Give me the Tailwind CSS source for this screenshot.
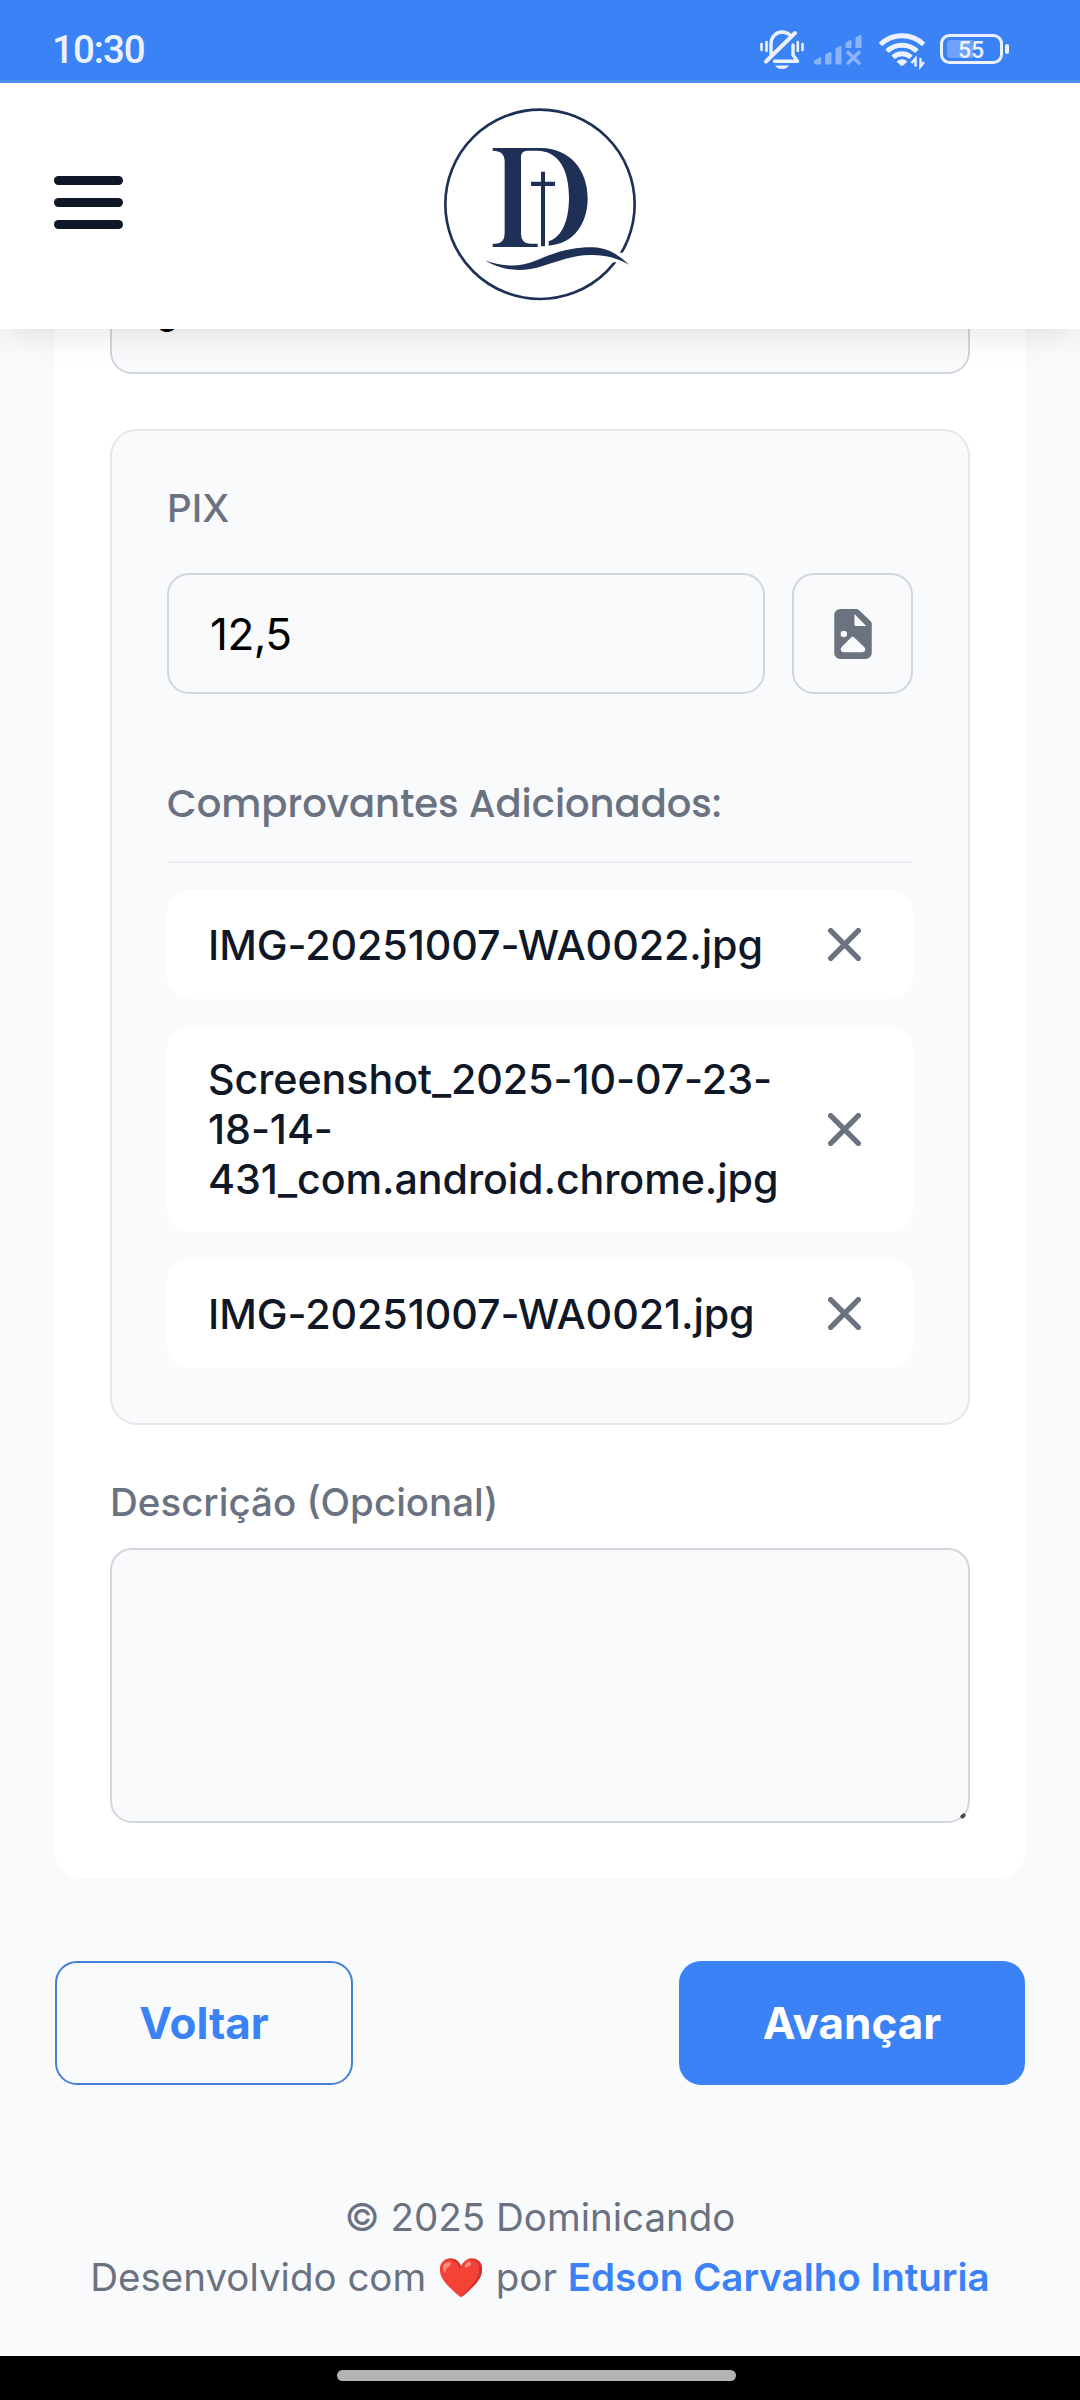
<!DOCTYPE html>
<html lang="pt-BR">
<head>
<meta charset="utf-8">
<title>Dominicando</title>
<script src="https://cdn.jsdelivr.net/npm/@tailwindcss/browser@4"></script>
</head>
<body class="flex h-[2400px] w-[1080px] flex-col overflow-hidden bg-[#f9fafc] font-['Inter',sans-serif] text-[38.5px] text-gray-500">

  <!-- System status bar -->
  <div class="relative z-20 flex h-[83px] shrink-0 items-start justify-between border-b-[3px] border-[#4e8ced] bg-[#3b82f6] pl-[52px] pr-[70px]">
    <span class="pt-[26px] font-['Roboto',sans-serif] text-[38.5px] leading-[48px] font-medium tracking-[-1px] text-[#ebf2fe]">10:30</span>
    <svg class="mt-[26px] h-[46px] w-[252px]" viewBox="758 26 252 46" fill="none">
      <!-- muted bell -->
      <g stroke="#ebf2fe" stroke-width="3.4" stroke-linecap="round" stroke-linejoin="round">
        <path d="M771 56V44c0-7 5-12 11-12 3 0 6 1 8 3"/>
        <path d="M774.500 61.300H797.500L793 55V45"/>
        <path d="M766 61.500L795 33" stroke-width="4"/>
        <path d="M761.500 44v6M766.500 42v9M797.800 42v9M802.500 44v6" stroke-width="2.600"/>
      </g>
      <path d="M775 65.500h14q-2.500 3.500-7 3.500t-7-3.500z" fill="#ebf2fe"/>
      <!-- no signal -->
      <g fill="#89b4fa">
        <path d="M814 60.500l7-3.500v7.500h-5q-2 0-2-2z"/>
        <path d="M825 55.500q0-1 1-1.500l4-2q1.500-.5 1.500 1v10q0 1.500-1.500 1.500h-3.500q-1.500 0-1.500-1.500z"/>
        <path d="M835.500 49.500q0-1 1-1.500l3.500-2q1.500-.5 1.500 1v16q0 1.500-1.500 1.500h-3q-1.500 0-1.500-1.500z"/>
        <path d="M845.500 43.500q0-1 1-1.500l3.500-2q1.500-.5 1.500 1v7h-6z"/>
        <path d="M855.500 38.500q0-1 1-1.500l3.500-2q1.500-.5 1.500 1v12h-6z"/>
      </g>
      <path d="M848 52.500l11 10.500M859 52.500l-11 10.500" stroke="#89b4fa" stroke-width="3.600" stroke-linecap="round"/>
      <!-- wifi -->
      <g stroke="#ebf2fe" stroke-width="5">
        <path d="M880.500 44.500a31 31 0 0 1 43 0"/>
        <path d="M887 51.300a21.500 21.500 0 0 1 30 0"/>
        <path d="M893 57.300a13 13 0 0 1 18 0"/>
      </g>
      <path d="M896.500 61.500q5.500-4.500 11 0l-4 3.700q-1.500 1-3 0z" fill="#ebf2fe"/>
      <path d="M915.500 66.500v-8l-4 4.500M920.500 58v8.500l3.500-4.500" stroke="#ebf2fe" stroke-width="2.400"/>
      <!-- battery -->
      <rect x="941.500" y="35.500" width="60" height="27" rx="8" stroke="#ebf2fe" stroke-width="3"/>
      <path d="M951 40h22v18h-22q-4 0-4-4v-10q0-4 4-4z" fill="#6ea3f8"/>
      <rect x="1005" y="44" width="4" height="10" rx="2" fill="#ebf2fe"/>
      <text x="971" y="57.500" text-anchor="middle" font-family="Roboto, sans-serif" font-size="23" font-weight="500" fill="#ebf2fe">55</text>
    </svg>
  </div>

  <!-- App header -->
  <header class="relative z-10 flex h-[246px] shrink-0 items-center justify-center bg-white shadow-[0_11px_30px_-6px_rgba(0,0,0,0.11)]">
    <button class="absolute left-[54px] flex flex-col gap-[13px] self-center pb-[8px]" aria-label="Menu">
      <span class="h-[9px] w-[69px] rounded-full bg-gray-900"></span>
      <span class="h-[9px] w-[69px] rounded-full bg-gray-900"></span>
      <span class="h-[9px] w-[69px] rounded-full bg-gray-900"></span>
    </button>
    <svg class="-mt-[2px] h-[230px] w-[240px]" viewBox="0 0 720 690" fill="none">
      <circle cx="360" cy="343" r="284" stroke="#1f3056" stroke-width="8"/>
      <path d="M590 488H630V517H570Z" fill="#fff"/>
      <path fill="#1f3056" d="M218 174H365C450 176 503 240 503 325C503 400 462 462 386 467V454C430 440 447 385 447 322C447 245 420 182 350 182H322Q303 182 303 202V430Q303 461 330 461H353V471H218V461H226Q254 461 254 430V215Q254 182 218 182Z"/>
      <path fill="#1f3056" d="M363 245H375V275H405V288H375V469H363V288H333V275H363Z"/>
      <path fill="#1f3056" d="M195 511C250 532 300 532 350 511C420 480 470 471 520 472C570 474 600 500 628 524C590 505 560 494 510 495C460 496 420 512 370 527C300 550 240 540 195 511Z"/>
    </svg>
  </header>

  <main class="flex shrink-0 flex-col px-[55px]">
    <section class="-mt-[76px] flex flex-col rounded-[27px] bg-white px-[55px] pb-[55px]">
      <div class="flex h-[121px] items-center rounded-[22px] border-2 border-gray-300 bg-[#f9fafc] pt-[5px] pl-[41px] text-[44px] leading-[54px] text-black">0</div>

      <div class="mt-[55px] flex flex-col rounded-[27px] border-2 border-gray-200 bg-[#f9fafc] px-[55px] pt-[53px] pb-[55px]">
        <label class="leading-[48px] font-medium">PIX</label>
        <div class="mt-[41px] flex gap-[27px]">
          <div class="flex h-[121px] flex-1 items-center rounded-[22px] border-2 border-gray-300 bg-[#f9fafc] pl-[41px] text-[44px] leading-[54px] tracking-[-0.5px] text-black">12,5</div>
          <button class="flex h-[121px] w-[121px] items-center justify-center rounded-[22px] border-2 border-gray-300 bg-[#f9fafc]" aria-label="Adicionar comprovante">
            <svg class="h-[50px] w-[38px]" viewBox="0 0 384 512" fill="#6b7280">
              <path fill-rule="evenodd" d="M64 0C29 0 0 29 0 64V448C0 483 29 512 64 512H320C355 512 384 483 384 448V154C384 141 378 132 370 124L258 16C248 6 238 0 224 0ZM207 52L327 174H223Q207 174 207 158ZM98 222a33 33 0 1 1 0 66a33 33 0 1 1 0-66ZM170 294Q189 276 208 294L308 392Q324 408 316 426Q310 444 288 444H96Q74 444 68 426Q60 408 76 388Z"/>
            </svg>
          </button>
        </div>

        <h4 class="mt-[80px] border-b-2 border-[#ebedf0] pb-[27px] font-['Poppins','Inter',sans-serif] leading-[60px] font-medium">Comprovantes Adicionados:</h4>

        <ul class="mt-[27px] flex flex-col gap-[27.500px] text-[41.25px] leading-[50px] font-medium tracking-[-0.1px] text-gray-900">
          <li class="flex h-[109px] items-center justify-between rounded-[22px] bg-white pr-[52px] pl-[41px]">
            <span>IMG-20251007-WA0022.jpg</span>
            <svg class="h-[33px] w-[33px]" viewBox="0 0 33 33" stroke="#6b7280" stroke-width="5.400" stroke-linecap="round"><path d="M2.700 2.700L30.300 30.300M30.300 2.700L2.700 30.300"/></svg>
          </li>
          <li class="flex h-[205px] items-center justify-between rounded-[22px] bg-white pr-[52px] pl-[41px]">
            <span>Screenshot_2025-10-07-23-<br>18-14-<br>431_com.android.chrome.jpg</span>
            <svg class="h-[33px] w-[33px]" viewBox="0 0 33 33" stroke="#6b7280" stroke-width="5.400" stroke-linecap="round"><path d="M2.700 2.700L30.300 30.300M30.300 2.700L2.700 30.300"/></svg>
          </li>
          <li class="flex h-[109px] items-center justify-between rounded-[22px] bg-white pr-[52px] pl-[41px]">
            <span>IMG-20251007-WA0021.jpg</span>
            <svg class="h-[33px] w-[33px]" viewBox="0 0 33 33" stroke="#6b7280" stroke-width="5.400" stroke-linecap="round"><path d="M2.700 2.700L30.300 30.300M30.300 2.700L2.700 30.300"/></svg>
          </li>
        </ul>
      </div>

      <label class="mt-[53px] leading-[48px] font-medium">Descrição (Opcional)</label>
      <div class="relative mt-[22px] h-[275px] rounded-[22px] border-2 border-gray-300 bg-[#f9fafc]">
        <span class="absolute right-[2px] bottom-[3px] h-[4px] w-[6px] -rotate-45 rounded-full bg-[#4b4d52]"></span>
      </div>
    </section>

    <div class="mt-[83px] flex justify-between text-[44px] font-bold">
      <button class="h-[124px] w-[298px] rounded-[22px] border-2 border-[#447fd9] text-[#3b82f6]">Voltar</button>
      <button class="h-[124px] w-[346px] rounded-[22px] bg-[#3b82f6] text-white">Avançar</button>
    </div>
  </main>

  <footer class="mt-[102px] shrink-0 text-center leading-[60px]">
    <p class="h-[60px]">© 2025 Dominicando</p>
    <p class="h-[60px] whitespace-nowrap">Desenvolvido com <span class="font-['Noto_Color_Emoji']">❤️</span> por <a class="font-semibold text-[#3b82f6]">Edson Carvalho Inturia</a></p>
  </footer>

  <!-- Gesture bar -->
  <div class="mt-auto flex h-[44px] shrink-0 justify-center bg-black pt-[14px] pr-[7px]">
    <span class="h-[11px] w-[399px] rounded-full bg-[#b3b3b3]"></span>
  </div>
</body>
</html>
